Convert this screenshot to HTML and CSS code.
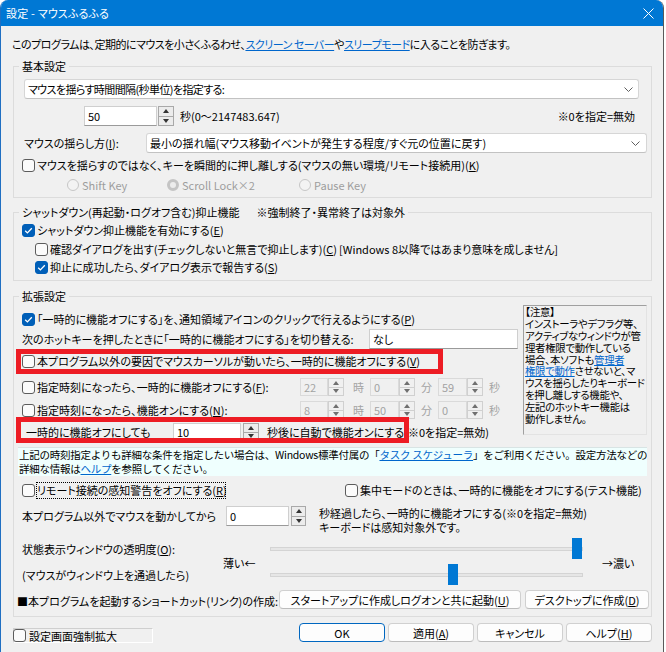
FILE: index.html
```html
<!DOCTYPE html>
<html lang="ja">
<head>
  <meta charset="UTF-8" />
  <title>設定 - マウスふるふる</title>
  <link rel="stylesheet" href="styles.css">
</head>
<body>

  <div class="window">
    <div class="titlebar">
      <span class="title">設定 - マウスふるふる</span>
      <svg class="close" width="11" height="11" viewBox="0 0 11 11"><path d="M0.5 0.5L10.5 10.5M10.5 0.5L0.5 10.5" stroke="#fff" stroke-width="1"/></svg>
    </div>

    <div class="client">
      <p class="intro">このプログラムは、定期的にマウスを小さくふるわせ、<a class="link">スクリーン セーバー</a>や<a class="link">スリープモード</a>に入ることを防ぎます。</p>

      <!-- 基本設定 -->
      <fieldset class="group basic">
        <legend>基本設定</legend>
        <div class="select interval-select">
          <span class="interval-text">マウスを揺らす時間間隔(秒単位)を指定する:</span>
          <svg class="chev" width="9" height="5" viewBox="0 0 9 5"><path d="M0.5 0.5L4.5 4.5L8.5 0.5" fill="none" stroke="#5f5f5f"/></svg>
        </div>
        <div class="row interval-row">
          <span class="edit interval-edit">50</span>
          <span class="spin"><span class="up"></span><span class="down"></span></span>
          <span class="range">秒(0～2147483.647)</span>
          <span class="hint">※0を指定=無効</span>
        </div>
        <div class="row method-row">
          <span class="method-label">マウスの揺らし方(<u>I</u>):</span>
          <div class="select method-select">
            <span>最小の揺れ幅(マウス移動イベントが発生する程度/すぐ元の位置に戻す)</span>
            <svg class="chev" width="9" height="5" viewBox="0 0 9 5"><path d="M0.5 0.5L4.5 4.5L8.5 0.5" fill="none" stroke="#5f5f5f"/></svg>
          </div>
        </div>
        <div class="row check-row key-row">
          <span class="cb"></span>
          <span>マウスを揺らすのではなく、キーを瞬間的に押し離しする(マウスの無い環境/リモート接続用)(<u>K</u>)</span>
        </div>
        <div class="row radio-row">
          <span class="radio-item shift"><span class="rb"></span>Shift Key</span>
          <span class="radio-item scroll"><span class="rb on"></span>Scroll Lock×2</span>
          <span class="radio-item pause"><span class="rb"></span>Pause Key</span>
        </div>
      </fieldset>

      <!-- シャットダウン抑止 -->
      <fieldset class="group shutdown">
        <legend>シャットダウン(再起動・ログオフ含む)抑止機能<span class="legend-note">※強制終了・異常終了は対象外</span></legend>
        <div class="row check-row sd-enable">
          <span class="cb on"><svg width="13" height="13" viewBox="0 0 13 13"><path d="M3.2 6.7L5.4 8.9L9.8 4.3" fill="none" stroke="#fff" stroke-width="1.3"/></svg></span>
          <span>シャットダウン抑止機能を有効にする(<u>E</u>)</span>
        </div>
        <div class="row check-row indent sd-confirm">
          <span class="cb"></span>
          <span class="confirm-label">確認ダイアログを出す(チェックしないと無言で抑止します)(<u>C</u>)</span>
          <span>[Windows 8以降ではあまり意味を成しません]</span>
        </div>
        <div class="row check-row indent sd-report">
          <span class="cb on"><svg width="13" height="13" viewBox="0 0 13 13"><path d="M3.2 6.7L5.4 8.9L9.8 4.3" fill="none" stroke="#fff" stroke-width="1.3"/></svg></span>
          <span>抑止に成功したら、ダイアログ表示で報告する(<u>S</u>)</span>
        </div>
      </fieldset>

      <!-- 拡張設定 -->
      <fieldset class="group extended">
        <legend>拡張設定</legend>
        <div class="ext-top">
          <div class="ext-left">
            <div class="row check-row tray-row">
              <span class="cb on"><svg width="13" height="13" viewBox="0 0 13 13"><path d="M3.2 6.7L5.4 8.9L9.8 4.3" fill="none" stroke="#fff" stroke-width="1.3"/></svg></span>
              <span>「一時的に機能オフにする」を、通知領域アイコンのクリックで行えるようにする(<u>P</u>)</span>
            </div>
            <div class="row hotkey-row">
              <span class="hotkey-label">次のホットキーを押したときに「一時的に機能オフにする」を切り替える:</span>
              <span class="edit hotkey-edit">なし</span>
            </div>
            <div class="row check-row cursor-row">
              <span class="cb"></span>
              <span>本プログラム以外の要因でマウスカーソルが動いたら、一時的に機能オフにする(<u>V</u>)</span>
              <span class="mark mark-cursor"></span>
            </div>
            <div class="row check-row time-row">
              <span class="cb"></span>
              <span class="time-label">指定時刻になったら、一時的に機能オフにする(<u>F</u>):</span>
              <span class="edit off t-hour">22</span>
              <span class="spin off"><span class="up"></span><span class="down"></span></span>
              <span class="unit u-hour">時</span>
              <span class="edit off t-min">0</span>
              <span class="spin off"><span class="up"></span><span class="down"></span></span>
              <span class="unit u-min">分</span>
              <span class="edit off t-sec">59</span>
              <span class="spin off"><span class="up"></span><span class="down"></span></span>
              <span class="unit u-sec">秒</span>
            </div>
            <div class="row check-row time-row time-on">
              <span class="cb"></span>
              <span class="time-label">指定時刻になったら、機能オンにする(<u>N</u>):</span>
              <span class="edit off t-hour">8</span>
              <span class="spin off"><span class="up"></span><span class="down"></span></span>
              <span class="unit u-hour">時</span>
              <span class="edit off t-min">50</span>
              <span class="spin off"><span class="up"></span><span class="down"></span></span>
              <span class="unit u-min">分</span>
              <span class="edit off t-sec">0</span>
              <span class="spin off"><span class="up"></span><span class="down"></span></span>
              <span class="unit u-sec">秒</span>
            </div>
            <div class="row resume-row">
              <span class="resume-label">一時的に機能オフにしても</span>
              <span class="edit resume-edit">10</span>
              <span class="spin"><span class="up"></span><span class="down"></span></span>
              <span class="resume-text">秒後に自動で機能オンにする(※0を指定=無効)</span>
              <span class="mark mark-resume"></span>
            </div>
          </div>
          <div class="note">
            <div>【注意】</div>
            <div>インストーラやデフラグ等、</div>
            <div>アクティブなウィンドウが管</div>
            <div>理者権限で動作している</div>
            <div>場合、本ソフトも<a class="link">管理者</a></div>
            <div><a class="link">権限で動作</a>させないと、マ</div>
            <div>ウスを揺らしたりキーボード</div>
            <div>を押し離しする機能や、</div>
            <div>左記のホットキー機能は</div>
            <div>動作しません。</div>
          </div>
        </div>

        <div class="info">
          <div>上記の時刻指定よりも詳細な条件を指定したい場合は、Windows標準付属の「<a class="link">タスク スケジューラ</a>」をご利用ください。設定方法などの</div>
          <div>詳細な情報は<a class="link">ヘルプ</a>を参照してください。</div>
        </div>

        <div class="row check-row remote-row">
          <span class="cb"></span>
          <span class="focus-label">リモート接続の感知警告をオフにする(<u>R</u>)</span>
          <span class="cb focus-cb"></span>
          <span>集中モードのときは、一時的に機能をオフにする(テスト機能)</span>
        </div>

        <div class="row idle-row">
          <span class="idle-label">本プログラム以外でマウスを動かしてから</span>
          <span class="edit idle-edit">0</span>
          <span class="spin"><span class="up"></span><span class="down"></span></span>
          <span class="idle-text">秒経過したら、一時的に機能オフにする(※0を指定=無効)<br>キーボードは感知対象外です。</span>
        </div>

        <div class="opacity">
          <div class="opacity-labels">
            <span>状態表示ウィンドウの透明度(<u>O</u>):</span>
            <span>(マウスがウィンドウ上を通過したら)</span>
          </div>
          <span class="weak">薄い←</span>
          <div class="sliders">
            <div class="slider"><span class="track"></span><span class="thumb" style="left: 302px"></span></div>
            <div class="slider"><span class="track"></span><span class="thumb" style="left: 178px"></span></div>
          </div>
          <span class="strong">→濃い</span>
        </div>

        <div class="row shortcut-row">
          <span class="shortcut-label">■本プログラムを起動するショートカット(リンク)の作成:</span>
          <button class="btn startup-btn">スタートアップに作成しログオンと共に起動(<u>U</u>)</button>
          <button class="btn desktop-btn">デスクトップに作成(<u>D</u>)</button>
        </div>
      </fieldset>

      <div class="footer">
        <div class="zoom-frame">
          <span class="cb"></span>
          <span>設定画面強制拡大</span>
        </div>
        <div class="footer-buttons">
          <button class="btn default">OK</button>
          <button class="btn">適用(<u>A</u>)</button>
          <button class="btn">キャンセル</button>
          <button class="btn">ヘルプ(<u>H</u>)</button>
        </div>
      </div>
    </div>
  </div>

</body>
</html>
```

FILE: styles.css
```css
* {
  margin: 0;
  padding: 0;
  box-sizing: border-box;
}

body {
  background: #fff;
  font-family: "Noto Sans CJK JP", "Noto Sans", sans-serif;
  font-size: 11px;
  font-feature-settings: "palt";
  color: #000;
}

u {
  text-decoration: underline;
  text-underline-offset: 1px;
}

.link {
  color: #0066cc;
  text-decoration: underline;
}

/* window frame */
.window {
  width: 664px;
  height: 652px;
  background: #f0f0f0;
  border-left: 1px solid #1f6fc2;
  border-right: 1px solid #5a5a5a;
  border-radius: 8px 8px 0 0;
  overflow: hidden;
  display: flex;
  flex-direction: column;
}

.titlebar {
  height: 26px;
  flex-shrink: 0;
  background: #0078d4;
  color: #fff;
  font-size: 11px;
  letter-spacing: 0.2px;
  display: flex;
  align-items: center;
  justify-content: space-between;
  padding: 0 9px 0 5px;
}

.client {
  padding: 10px 11px 0 12px;
}

.intro {
  height: 16px;
  line-height: 16px;
  margin: 0 0 7px -1px;
  letter-spacing: -0.5px;
  white-space: nowrap;
}

/* group boxes */
.group {
  width: 639px;
  border: 1px solid #dcdcdc;
  min-width: 0;
}

.group legend {
  margin-left: 5px;
  padding: 0 3px;
  height: 14px;
  line-height: 14px;
  white-space: nowrap;
}

.legend-note {
  margin-left: 17px;
}

.basic {
  padding-bottom: 4px;
}

.shutdown {
  margin-top: 7px;
  padding-bottom: 5px;
}

.extended {
  margin-top: 8px;
  padding-bottom: 7px;
}

.row {
  display: flex;
  align-items: center;
  white-space: nowrap;
  position: relative;
}

.check-row {
  height: 16px;
  padding-left: 8px;
}

.check-row .cb {
  margin-right: 2px;
}

.check-row.indent {
  padding-left: 21px;
}

/* controls */
.cb {
  width: 13px;
  height: 13px;
  flex-shrink: 0;
  border: 1px solid #5c5c5c;
  border-radius: 3px;
  background: #fbfbfb;
  display: inline-flex;
}

.cb.on {
  background: #005fb8;
  border-color: #005fb8;
}

.cb.on svg {
  margin: -1px;
}

.rb {
  width: 12px;
  height: 12px;
  border-radius: 50%;
  border: 1px solid #c6c6c6;
  background: #f3f3f3;
  margin-right: 3px;
  flex-shrink: 0;
}

.rb.on {
  border: 3.5px solid #c4c4c4;
  background: #ececec;
}

.select {
  height: 20px;
  background: #fff;
  border: 1px solid #d6d6d6;
  border-bottom-color: #c2c2c2;
  border-radius: 3px;
  display: flex;
  align-items: center;
  justify-content: space-between;
  white-space: nowrap;
}

.edit {
  height: 20px;
  background: #fff;
  border: 1px solid #cfcfcf;
  border-bottom-color: #9a9a9a;
  padding-left: 3px;
  display: flex;
  align-items: center;
  flex-shrink: 0;
}

.edit.off {
  height: 18px;
  background: #f0f0f0;
  border-color: #dadada;
  color: #a3a3a3;
}

.spin {
  width: 16px;
  height: 20px;
  display: flex;
  flex-direction: column;
  flex-shrink: 0;
  margin-left: 1px;
}

.spin span {
  flex: 1;
  border: 1px solid #a9a9a9;
  background: #ececec;
  display: flex;
  align-items: center;
  justify-content: center;
}

.spin .down {
  border-top: none;
}

.spin .up::after {
  content: "";
  border-left: 3.5px solid transparent;
  border-right: 3.5px solid transparent;
  border-bottom: 4px solid #333;
}

.spin .down::after {
  content: "";
  border-left: 3.5px solid transparent;
  border-right: 3.5px solid transparent;
  border-top: 4px solid #333;
}

.spin.off {
  height: 18px;
  margin-left: 0;
}

.spin.off span {
  border-color: #d0d0d0;
  background: #f0f0f0;
}

.spin.off .up::after {
  border-bottom-color: #6f6f6f;
}

.spin.off .down::after {
  border-top-color: #6f6f6f;
}

.btn {
  height: 19px;
  font-family: inherit;
  font-size: 11px;
  font-feature-settings: "palt";
  background: #fdfdfd;
  border: 1px solid #d0d0d0;
  border-bottom-color: #bcbcbc;
  border-radius: 4px;
  color: #000;
}

.btn.default {
  border-color: #0067c0;
}

/* 基本設定 */
.interval-select {
  width: 615px;
  margin: 6px 0 0 10px;
  padding: 0 5px 0 3px;
}

.interval-text {
  letter-spacing: -0.6px;
}

.interval-row {
  height: 20px;
  margin-top: 7px;
  padding-left: 70px;
}

.interval-edit {
  width: 73px;
}

.range {
  margin-left: 6px;
}

.hint {
  margin-left: auto;
  margin-right: 16px;
}

.method-row {
  height: 20px;
  margin-top: 7px;
  padding-left: 10px;
}

.method-label {
  width: 122px;
}

.method-select {
  width: 501px;
  padding: 0 6px 0 3px;
}

.key-row {
  margin-top: 4px;
}

.radio-row {
  height: 16px;
  margin-top: 4px;
  padding-left: 53px;
  color: #9d9d9d;
}

.radio-item {
  display: flex;
  align-items: center;
}

.radio-item.shift {
  width: 100px;
}

.radio-item.scroll {
  width: 132px;
}

/* シャットダウン */
.sd-enable {
  margin-top: 3px;
}

.sd-confirm {
  margin-top: 3px;
}

.confirm-label {
  width: 289px;
}

.sd-report {
  margin-top: 2px;
}

/* 拡張設定 */
.ext-top {
  display: flex;
  align-items: flex-start;
}

.ext-left {
  width: 505px;
}

.tray-row {
  margin-top: 8px;
}

.hotkey-row {
  height: 20px;
  margin-top: 2px;
  padding-left: 8px;
}

.hotkey-label {
  width: 347px;
}

.hotkey-edit {
  width: 149px;
}

.cursor-row {
  margin-top: 4px;
}

.time-row {
  height: 18px;
  margin-top: 9px;
}

.time-row.time-on {
  margin-top: 5px;
}

.time-label {
  width: 263px;
}

.t-hour {
  width: 28px;
}

.t-min,
.t-sec {
  width: 29px;
}

.unit {
  color: #a3a3a3;
  width: 17px;
}

.u-hour {
  margin-left: 9px;
}

.u-min {
  margin-left: 6px;
}

.u-sec {
  margin-left: 6px;
}

.resume-row {
  height: 18px;
  margin-top: 4px;
  padding-left: 12px;
}

.resume-label {
  width: 147px;
}

.resume-edit {
  width: 68px;
  height: 18px;
}

.resume-row .spin {
  height: 18px;
  margin-left: 2px;
}

.resume-text {
  margin-left: 8px;
}

/* red highlight marks drawn over the dialog */
.mark {
  position: absolute;
  border: 5px solid #ed1c24;
  pointer-events: none;
}

.mark-cursor {
  left: 2px;
  top: -4px;
  width: 427px;
  height: 25px;
}

.mark-resume {
  left: 2px;
  top: -6px;
  width: 393px;
  height: 26px;
}

.note {
  width: 124px;
  height: 130px;
  margin: 2px 0 0 4px;
  padding: 0 0 0 1px;
  border: 1px solid #a0a0a0;
  border-right-color: #e3e3e3;
  border-bottom-color: #e3e3e3;
  font-size: 10.4px;
  letter-spacing: -0.3px;
  line-height: 11.9px;
  white-space: nowrap;
  overflow: hidden;
}

.note div {
  height: 11.9px;
}

.info {
  width: 629px;
  height: 29px;
  margin: 6px 0 0 4px;
  padding-left: 1px;
  background: #effffe;
  border-top: 1px solid #d8e4e4;
  line-height: 14px;
  font-size: 10.5px;
  letter-spacing: -0.25px;
  font-feature-settings: normal;
  white-space: nowrap;
  overflow: hidden;
}

.remote-row {
  margin-top: 6px;
}

.focus-label {
  width: 188px;
  height: 15px;
  line-height: 15px;
  outline: 1px dotted #000;
}

.focus-cb {
  margin-left: 120px;
  margin-right: 3px;
}

.idle-row {
  height: 28px;
  margin-top: 8px;
  padding-left: 8px;
  align-items: flex-start;
}

.idle-label {
  width: 204px;
  line-height: 20px;
}

.idle-edit {
  width: 63px;
}

.idle-row .spin {
  width: 15px;
  margin-left: 2px;
}

.idle-text {
  margin-left: 13px;
  line-height: 14px;
}

.opacity {
  height: 47px;
  margin-top: 4px;
  padding-left: 8px;
  display: flex;
  align-items: center;
  white-space: nowrap;
}

.opacity-labels {
  width: 201px;
  height: 47px;
  display: flex;
  flex-direction: column;
  justify-content: space-between;
  padding: 3px 0 2px;
  line-height: 16px;
}

.weak {
  width: 47px;
  margin-top: 3px;
}

.sliders {
  width: 313px;
  display: flex;
  flex-direction: column;
  gap: 5px;
}

.slider {
  height: 21px;
  position: relative;
  display: flex;
  align-items: center;
}

.track {
  width: 100%;
  height: 4px;
  margin-top: 1px;
  background: #e6e6e6;
  border: 1px solid #d4d4d4;
}

.thumb {
  position: absolute;
  top: 0;
  width: 10px;
  height: 21px;
  background: #0078d4;
}

.strong {
  margin-left: 19px;
  margin-top: 3px;
}

.shortcut-row {
  height: 19px;
  margin-top: 5px;
  padding-left: 3px;
}

.shortcut-label {
  width: 262px;
  margin-top: 3px;
}

.startup-btn {
  width: 242px;
}

.desktop-btn {
  width: 124px;
  margin-left: 4px;
}

/* bottom bar */
.footer {
  margin-top: 6px;
  display: flex;
  align-items: flex-end;
  justify-content: space-between;
}

.zoom-frame {
  width: 140px;
  height: 15px;
  margin-bottom: -1px;
  display: flex;
  align-items: center;
  border: 1px solid #cfcfcf;
  border-right-color: #fff;
  border-bottom-color: #fff;
}

.zoom-frame .cb {
  margin: 0 3px 0 -1px;
}

.footer-buttons {
  display: flex;
  gap: 3px;
}

.footer-buttons .btn {
  width: 86px;
}
```
